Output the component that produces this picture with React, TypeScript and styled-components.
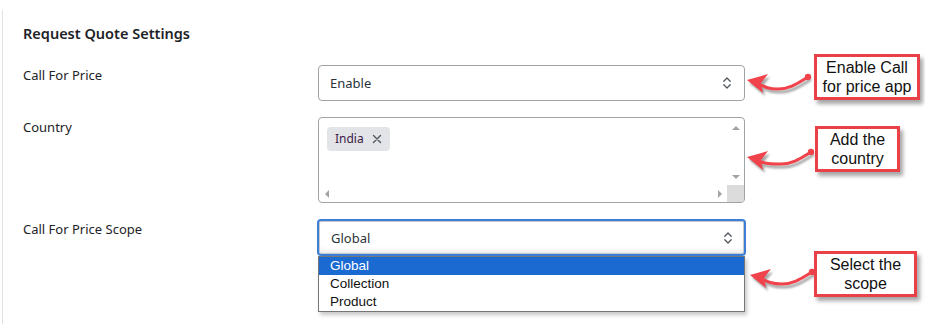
import React from "react";
import styled, { createGlobalStyle } from "styled-components";

const Global = createGlobalStyle`
  html, body { margin: 0; padding: 0; background: #ffffff; }
  body { font-family: "Noto Sans", "Open Sans", sans-serif; color: #1d2327; }
  * { box-sizing: border-box; }
`;

const Page = styled.div`
  position: relative;
  width: 925px;
  height: 324px;
  overflow: hidden;
  padding: 10px 0 0 2px;
`;

const Panel = styled.section`
  border-left: 1px solid #e2e2e2;
  height: 314px;
  padding: 13px 0 0 20px;
`;

const Heading = styled.h2`
  margin: 0 0 22px 0;
  font-size: 14.5px;
  line-height: 20px;
  font-weight: 600;
  color: #1d2327;
`;

const Rows = styled.div`
  display: flex;
  flex-direction: column;
  gap: 16px;
`;

const Row = styled.div`
  display: grid;
  grid-template-columns: 295px 427px;
  align-items: start;
`;

const Label = styled.label`
  font-size: 13px;
  line-height: 18px;
  padding-top: 1px;
  color: #1d2327;
`;

const Field = styled.div`
  position: relative;
`;

const SelectBox = styled.div<{ $focused?: boolean }>`
  display: flex;
  align-items: center;
  justify-content: space-between;
  height: ${(p) => (p.$focused ? "37px" : "36px")};
  margin-left: ${(p) => (p.$focused ? "-1px" : "0")};
  width: ${(p) => (p.$focused ? "429px" : "427px")};
  padding: 0 ${(p) => (p.$focused ? "11px" : "12px")} 0 ${(p) => (p.$focused ? "12px" : "11px")};
  border: ${(p) => (p.$focused ? "2px solid #3d7fd6" : "1px solid #9ea3a8")};
  border-radius: 4px;
  box-shadow: ${(p) =>
    p.$focused ? "inset 0 0 0 1px #c5c9ce, inset 0 -6px 6px -4px rgba(0,0,0,0.12)" : "none"};
  font-size: 13px;
  color: #2c3338;
  background: #fff;
`;

const Chevrons = () => (
  <svg width="10" height="14" viewBox="0 0 10 14" fill="none">
    <path d="M1.8 5.2 L5 2 L8.2 5.2" stroke="#50575e" strokeWidth="1.3" strokeLinecap="round" strokeLinejoin="round" />
    <path d="M1.8 8.8 L5 12 L8.2 8.8" stroke="#50575e" strokeWidth="1.3" strokeLinecap="round" strokeLinejoin="round" />
  </svg>
);

const MultiBox = styled.div`
  height: 86px;
  border: 1px solid #9ea3a8;
  border-radius: 4px;
  display: grid;
  grid-template-columns: 1fr 17px;
  grid-template-rows: 1fr 17px;
  overflow: hidden;
  background: #fff;
`;

const MultiContent = styled.div`
  padding: 8px 8px;
`;

const Tag = styled.span`
  display: inline-flex;
  align-items: center;
  gap: 8px;
  height: 24px;
  padding: 0 8px 0 8px;
  background: #e2e4e8;
  border-radius: 4px;
  font-size: 12px;
  color: #3c2046;
`;

const CloseX = () => (
  <svg width="10" height="10" viewBox="0 0 10 10" fill="none">
    <path d="M1.5 1.5 L8.5 8.5 M8.5 1.5 L1.5 8.5" stroke="#50575e" strokeWidth="1.4" strokeLinecap="round" />
  </svg>
);

const VScroll = styled.div`
  display: flex;
  flex-direction: column;
  justify-content: space-between;
  align-items: center;
  padding: 8px 0 6px;
`;

const HScroll = styled.div`
  display: flex;
  justify-content: space-between;
  align-items: center;
  padding: 0 5px 0 6px;
`;

const Corner = styled.div`
  background: #dcdcdc;
`;

const Tri = styled.span<{ $dir: "up" | "down" | "left" | "right" }>`
  width: 0;
  height: 0;
  border-style: solid;
  border-color: transparent;
  ${(p) =>
    p.$dir === "up"
      ? "border-width: 0 4px 4px 4px; border-bottom-color: #a3a3a3;"
      : p.$dir === "down"
      ? "border-width: 4px 4px 0 4px; border-top-color: #a3a3a3;"
      : p.$dir === "left"
      ? "border-width: 4px 4px 4px 0; border-right-color: #a3a3a3;"
      : "border-width: 4px 0 4px 4px; border-left-color: #a3a3a3;"}
`;

const Dropdown = styled.ul`
  position: absolute;
  top: 37px;
  left: 0;
  width: 427px;
  margin: 0;
  padding: 0;
  list-style: none;
  border: 1px solid #767676;
  background: #fff;
  box-shadow: 2px 3px 4px rgba(0, 0, 0, 0.22);
  font-family: "Liberation Sans", Arial, sans-serif;
  font-size: 13.5px;
`;

const Option = styled.li<{ $selected?: boolean }>`
  height: 18px;
  line-height: 18px;
  padding-left: 11px;
  background: ${(p) => (p.$selected ? "#1b6ad2" : "transparent")};
  color: ${(p) => (p.$selected ? "#ffffff" : "#111")};
`;

const NoteBox = styled.div`
  position: absolute;
  border: 3px solid #ea4149;
  background: #fff;
  box-shadow: 3px 4px 4px rgba(0, 0, 0, 0.35);
  font-family: "Liberation Sans", Arial, sans-serif;
  font-size: 16px;
  line-height: 19px;
  color: #111;
  text-align: center;
  display: flex;
  align-items: center;
  justify-content: center;
`;

const ArrowSvg = styled.svg`
  position: absolute;
  overflow: visible;
`;

type NoteProps = {
  box: { x: number; y: number; w: number; h: number };
  tip: { x: number; y: number };
  dot: { x: number; y: number };
  lines: string[];
};

const Note = ({ box, tip, dot, lines }: NoteProps) => {
  const ox = tip.x - 4;
  const oy = Math.min(tip.y, dot.y) - 14;
  const tx = tip.x - ox;
  const ty = tip.y - oy;
  const dx = dot.x - ox;
  const dy = dot.y - oy;
  const path = `M${dx},${dy} C${dx - 10},${dy + 6} ${dx - 18},${dy + 12} ${dx - 30},${dy + 12} C${dx - 40},${dy + 12} ${tx + 18},${ty + 7} ${tx + 10},${ty + 3}`;
  const head = `${tx},${ty} ${tx + 21},${ty - 6} ${tx + 14},${ty + 3} ${tx + 16},${ty + 13}`;
  return (
    <>
      <ArrowSvg
        width={dot.x - ox + 6}
        height={40}
        style={{ left: ox, top: oy }}
        viewBox={`0 0 ${dot.x - ox + 6} 40`}
      >
        <defs>
          <filter id={`sh${box.y}`} x="-20%" y="-50%" width="140%" height="200%">
            <feGaussianBlur stdDeviation="1.2" />
          </filter>
        </defs>
        <g transform="translate(2,3)" opacity="0.35" filter={`url(#sh${box.y})`}>
          <path d={path} stroke="#000" strokeWidth="3" fill="none" strokeLinecap="round" />
          <polygon points={head} fill="#000" />
        </g>
        <path d={path} stroke="#f0434b" strokeWidth="3" fill="none" strokeLinecap="round" />
        <polygon points={head} fill="#f0434b" strokeLinejoin="round" />
        <circle cx={dx} cy={dy} r="3.2" fill="#f0434b" />
      </ArrowSvg>
      <NoteBox style={{ left: box.x, top: box.y, width: box.w, height: box.h }}>
        <div>
          {lines.map((l) => (
            <div key={l}>{l}</div>
          ))}
        </div>
      </NoteBox>
    </>
  );
};

export default function App() {
  return (
    <>
      <Global />
      <Page>
        <Panel>
          <Heading>Request Quote Settings</Heading>
          <Rows>
            <Row>
              <Label>Call For Price</Label>
              <Field>
                <SelectBox>
                  <span>Enable</span>
                  <Chevrons />
                </SelectBox>
              </Field>
            </Row>
            <Row>
              <Label>Country</Label>
              <Field>
                <MultiBox>
                  <MultiContent>
                    <Tag>
                      India <CloseX />
                    </Tag>
                  </MultiContent>
                  <VScroll>
                    <Tri $dir="up" />
                    <Tri $dir="down" />
                  </VScroll>
                  <HScroll>
                    <Tri $dir="left" />
                    <Tri $dir="right" />
                  </HScroll>
                  <Corner />
                </MultiBox>
              </Field>
            </Row>
            <Row>
              <Label>Call For Price Scope</Label>
              <Field>
                <SelectBox $focused>
                  <span>Global</span>
                  <Chevrons />
                </SelectBox>
                <Dropdown>
                  <Option $selected>Global</Option>
                  <Option>Collection</Option>
                  <Option>Product</Option>
                </Dropdown>
              </Field>
            </Row>
          </Rows>
        </Panel>
        <Note
          box={{ x: 814, y: 54, w: 106, h: 46 }}
          tip={{ x: 747, y: 80 }}
          dot={{ x: 808, y: 77 }}
          lines={["Enable Call", "for price app"]}
        />
        <Note
          box={{ x: 815, y: 126, w: 85, h: 46 }}
          tip={{ x: 747, y: 157 }}
          dot={{ x: 811, y: 152 }}
          lines={["Add the", "country"]}
        />
        <Note
          box={{ x: 814, y: 251, w: 103, h: 46 }}
          tip={{ x: 750, y: 275 }}
          dot={{ x: 812, y: 272 }}
          lines={["Select the", "scope"]}
        />
      </Page>
    </>
  );
}
